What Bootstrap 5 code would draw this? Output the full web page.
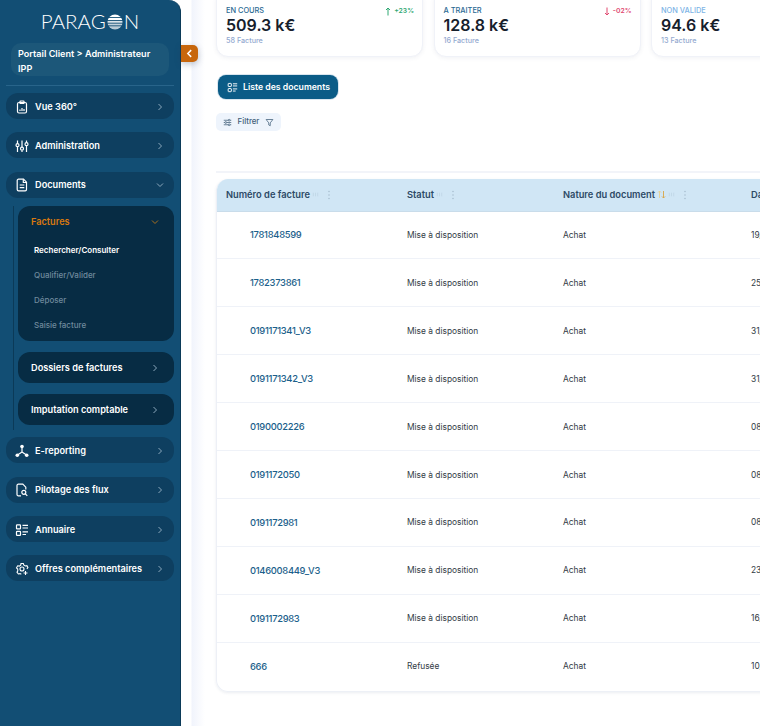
<!DOCTYPE html>
<html lang="fr">

<head>
  <meta charset="UTF-8" />
  <meta name="viewport" content="width=device-width, initial-scale=1.0" />
  <title>Paragon - Factures</title>
  <link href="https://cdn.jsdelivr.net/npm/bootstrap@5.3.0/dist/css/bootstrap.min.css" rel="stylesheet" />
  <style>
    html, body { height: 726px; overflow: hidden; }
    body { font-family: "Inter", "Liberation Sans", sans-serif; background: #fff; color: #1c2733; }

    /* sidebar */
    .side { width: 181px; height: 726px; flex: none; background: #124e74; border-top-right-radius: 12px; border-right: 1px solid #0b3a58; padding: 12px 6px 0 6px; position: relative; }
    .logo { height: 19px; color: #fff; font-family: "Lato", sans-serif; font-weight: 300; font-size: 20.5px; line-height: 19px; letter-spacing: 0; margin-bottom: 12px; }
    .logo svg { width: 16px; height: 16px; margin: 0 1px; }
    .who { margin: 0 5px 9px 5px; padding: 4px 7px; height: 33px; background: #1c5779; border-radius: 10px; color: #fff; font-size: 9.1px; font-weight: 600; line-height: 14.5px; }
    .sep { height: 1px; background: #28648a; margin-bottom: 7px; }
    .menu-it { height: 26px; background: #0e3f60; border-radius: 12px; color: #fff; font-size: 9.2px; font-weight: 600; white-space: nowrap; padding: 1px 10px 0 9px; margin-bottom: 13.3px; gap: 6px; }
    .menu-it .ico { width: 14px; height: 14px; flex: none; }
    .chev { width: 8px; height: 8px; flex: none; margin-left: auto; color: #8ba8bc; }
    .sub-wrap { border-left: 1px solid #0b3a58; margin: -5px 0 7.6px 7px; padding-left: 4px; height: 224px; }
    .sub-box { background: #072c44; border-radius: 12px; color: #fff; font-size: 9.2px; font-weight: 600; white-space: nowrap; }
    .sub-row { height: 31px; padding: 1px 15px 0 13px; margin-bottom: 11px; }
    .sub-open { height: 135px; margin-bottom: 11px; padding: 10px 15px 0 13px; }
    .sub-open .sub-head { color: #d9780f; height: 12px; margin-bottom: 16px; }
    .sub-open .sub-head .chev { color: #a8701f; }
    .leaf { font-size: 8px; font-weight: 500; color: #6f8a9d; margin-left: 3px; height: 25px; }
    .leaf.on { color: #fff; font-weight: 600; }
    .toggle { position: absolute; left: 181px; top: 45px; width: 17px; height: 17px; background: #c7660c; border-radius: 0 5px 5px 0; box-shadow: 0 2px 6px rgba(40, 60, 90, .3); color: #fff; }
    .toggle svg { width: 9px; height: 9px; }

    /* main */
    .main { flex: 1 1 auto; min-width: 0; padding-left: 35px; background: linear-gradient(90deg, #fff 10px, #f1f4fc 11px, #fff 24px); }
    .kpis { gap: 10.5px; width: 700px; margin-top: -12px; margin-bottom: 18px; }
    .kpi { width: 207px; height: 69px; flex: none; background: #fff; border: 1px solid #f0f2f8; border-radius: 12px; box-shadow: 0 1px 4px rgba(60, 80, 120, .08); padding: 17px 9px 0 9px; position: relative; }
    .kpi-lab { font-size: 7.4px; font-weight: 500; line-height: 10px; color: #2b6a93; }
    .kpi-lab.pale { color: #7db4e6; }
    .kpi-val { font-size: 16px; font-weight: 600; line-height: 19px; color: #16202c; }
    .kpi-sub { font-size: 7.2px; font-weight: 500; line-height: 10px; color: #93a9d0; margin-top: 1px; }
    .kpi-delta { position: absolute; right: 8px; top: 17px; font-size: 6.8px; font-weight: 600; line-height: 10px; gap: 3px; }
    .kpi-delta svg { width: 6px; height: 9px; }
    .delta-up { color: #2fa873; }
    .delta-down { color: #e0486f; }
    .btn-liste { margin-left: 2px; width: 120px; height: 24px; padding: 1px 0 0 1px; background: #0b5c87; border: 0; border-radius: 8px; font-size: 8.7px; font-weight: 600; color: #fff; gap: 5px; box-shadow: 0 0 0 1px #d9e6ef; }
    .btn-liste svg { width: 11px; height: 11px; }
    .filtre { width: 65px; height: 18px; margin-top: 14px; background: #eef4fc; border-radius: 5px; font-size: 7.8px; font-weight: 500; color: #3f5d78; gap: 6px; }
    .filtre svg { width: 9px; height: 9px; }
    .rule { height: 2px; background: #f2f4f9; margin: 40px 0 6px 0; width: 560px; }
    .doc-wrap { width: 900px; height: 513px; border: 1px solid #edf0f6; border-top: 0; border-radius: 12px; overflow: hidden; box-shadow: 0 1px 3px rgba(60, 80, 120, .1); }
    .doc-table { table-layout: fixed; width: 900px; margin: 0; }
    .doc-table th { height: 32px; padding: 0 0 0 9px; background: #d0e6f5; border-bottom: 1px solid #c9dcea; font-size: 9.3px; font-weight: 600; color: #2d4a66; vertical-align: middle; }
    .doc-table td { height: 47.9px; padding: 1px 0 0 9px; border-bottom: 1px solid #eff2f8; font-size: 8.4px; font-weight: 400; color: #333c46; vertical-align: middle; }
    .doc-table tr:last-child td { border-bottom: 0; }
    .doc-table td.num { padding-left: 33px; font-size: 9.4px; font-weight: 500; letter-spacing: -.3px; color: #1c5f8b; }
    .th-in { gap: 2px; }
    .th-in svg { flex: none; }
    .mini { width: 7px; height: 7px; color: #bcd2e2; }
    .dots { width: 8px; height: 10px; color: #a9c0d2; margin-left: 4px; }
    .sorter { width: 9px; height: 9px; }
    .col-num { width: 181px; }
    .col-stat { width: 156px; }
    .col-nat { width: 188px; }
  </style>
</head>

<body class="d-flex">
  <svg width="0" height="0" class="position-absolute">
    <symbol id="i-chev" viewBox="0 0 8 8"><path d="M2.5 1 5.5 4 2.5 7" fill="none" stroke="currentColor" stroke-width="1" /></symbol>
    <symbol id="i-down" viewBox="0 0 8 8"><path d="M1 2.5 4 5.5 7 2.5" fill="none" stroke="currentColor" stroke-width="1" /></symbol>
    <symbol id="i-clip" viewBox="0 0 14 14"><g fill="none" stroke="currentColor" stroke-width="1.2"><rect x="2.5" y="2.5" width="9" height="10.5" rx="1.5" /><rect x="5" y="1" width="4" height="2.5" rx=".6" /><path d="M5 9.5v1.5M7 8v3M9 9v2" /></g></symbol>
    <symbol id="i-sliders" viewBox="0 0 14 14"><g fill="none" stroke="currentColor" stroke-width="1.2"><path d="M2.5 1.5v3M2.5 8v5M7 1.5v6.5M7 11.5v1.5M11.5 1.5v2M11.5 7v6" /><circle cx="2.5" cy="6.2" r="1.5" /><circle cx="7" cy="9.7" r="1.5" /><circle cx="11.5" cy="5.2" r="1.5" /></g></symbol>
    <symbol id="i-doc" viewBox="0 0 14 14"><g fill="none" stroke="currentColor" stroke-width="1.2"><path d="M3.5 1.2h5l3 3v7.3a1.3 1.3 0 0 1-1.3 1.3H3.5a1.3 1.3 0 0 1-1.3-1.3v-9a1.3 1.3 0 0 1 1.3-1.3z" /><path d="M8.3 1.4v3.1h3M4.7 7h4.6M4.7 9.700h4.6" /></g></symbol>
    <symbol id="i-net" viewBox="0 0 14 14"><g fill="currentColor"><circle cx="7" cy="2.500" r="1.800" /><circle cx="2.300" cy="11.300" r="1.800" /><circle cx="11.700" cy="11.300" r="1.800" /></g><path d="M7 3v5M7 8 2.500 11M7 8l4.500 3" fill="none" stroke="currentColor" stroke-width="1.200" /></symbol>
    <symbol id="i-search" viewBox="0 0 14 14"><g fill="none" stroke="currentColor" stroke-width="1.200"><path d="M6 12.800H3.300A1.300 1.300 0 0 1 2 11.500v-9a1.300 1.300 0 0 1 1.300-1.300h4.500l3 3v2.300" /><circle cx="8.800" cy="9.300" r="2" /><path d="M10.300 10.800 12.300 12.800" /></g></symbol>
    <symbol id="i-list" viewBox="0 0 14 14"><g fill="none" stroke="currentColor" stroke-width="1.200"><rect x="1.500" y="1.800" width="4" height="4" rx=".6" /><rect x="1.500" y="8.300" width="4" height="4" rx=".6" /><path d="M7.500 2.300h5.500M7.500 5h5.500M7.500 8.800h5.500M7.500 11.500h3.500" /></g></symbol>
    <symbol id="i-gear" viewBox="0 0 14 14"><g fill="none" stroke="currentColor" stroke-width="1.100"><path d="M6.300 12.300 5 11.600 3.400 12 2 10.200l.8-1.400L2.700 7 1.500 5.800l1.200-2 1.600.3 1.400-1L6 1.500h2.300l.6 1.600 1.400.9 1.600-.3 1 1.800-1 1.300" /><circle cx="7" cy="7" r="2" /><path d="M10.500 9v4M8.500 11h4" /></g></symbol>
    <symbol id="i-tune" viewBox="0 0 12 12"><path d="M1 3h6M9.500 3H11M1 6h1.500M5 6h6M1 9h6M9.500 9H11" fill="none" stroke="currentColor" stroke-width="1" /><g fill="none" stroke="currentColor" stroke-width="1"><circle cx="8.200" cy="3" r="1.200" /><circle cx="3.700" cy="6" r="1.200" /><circle cx="8.200" cy="9" r="1.200" /></g></symbol>
    <symbol id="i-funnel" viewBox="0 0 12 12"><path d="M1.500 2h9L7 6.500v3.800L5 9.300V6.500z" fill="none" stroke="currentColor" stroke-width="1" /></symbol>
    <symbol id="i-bars" viewBox="0 0 8 8"><path d="M1.500 2v4M4 2v4M6.500 2v4" fill="none" stroke="currentColor" stroke-width=".8" /></symbol>
    <symbol id="i-dots" viewBox="0 0 8 10"><g fill="currentColor"><circle cx="4" cy="1.500" r=".8" /><circle cx="4" cy="5" r=".8" /><circle cx="4" cy="8.500" r=".8" /></g></symbol>
    <symbol id="i-up-arrow" viewBox="0 0 6 9"><path d="M3 8.500V1M1 3 3 1l2 2" fill="none" stroke="currentColor" stroke-width="1" /></symbol>
    <symbol id="i-down-arrow" viewBox="0 0 6 9"><path d="M3 .5V8M1 6l2 2 2-2" fill="none" stroke="currentColor" stroke-width="1" /></symbol>
    <symbol id="i-sort" viewBox="0 0 9 9"><path d="M2.500 8V1M1 2.500 2.500 1 4 2.500" fill="none" stroke="#e8cf90" stroke-width=".9" /><path d="M6.500 1v7M5 6.500 6.500 8 8 6.500" fill="none" stroke="#d9a545" stroke-width=".9" /></symbol>
  </svg>

  <aside class="side">
    <div class="logo d-flex justify-content-center align-items-center">PARAG<svg viewBox="0 0 18 18"><defs><clipPath id="disc"><circle cx="9" cy="9" r="8.500" /></clipPath></defs><g clip-path="url(#disc)" fill="#fff"><rect y="0" width="18" height="3.400" /><rect y="4.400" width="18" height="2.400" /><rect y="7.800" width="18" height="2" opacity=".85" /><rect y="10.800" width="18" height="2" opacity=".75" /><rect y="13.800" width="18" height="4.200" opacity=".7" /></g></svg>N</div>
    <div class="who">Portail Client &gt; Administrateur IPP</div>
    <div class="sep"></div>

    <div class="menu-it d-flex align-items-center"><svg class="ico"><use href="#i-clip" /></svg>Vue 360°<svg class="chev"><use href="#i-chev" /></svg></div>
    <div class="menu-it d-flex align-items-center"><svg class="ico"><use href="#i-sliders" /></svg>Administration<svg class="chev"><use href="#i-chev" /></svg></div>
    <div class="menu-it d-flex align-items-center"><svg class="ico"><use href="#i-doc" /></svg>Documents<svg class="chev"><use href="#i-down" /></svg></div>

    <div class="sub-wrap">
      <div class="sub-box sub-open">
        <div class="sub-head d-flex align-items-center">Factures<svg class="chev"><use href="#i-down" /></svg></div>
        <div class="leaf on">Rechercher/Consulter</div>
        <div class="leaf">Qualifier/Valider</div>
        <div class="leaf">Déposer</div>
        <div class="leaf">Saisie facture</div>
      </div>
      <div class="sub-box sub-row d-flex align-items-center">Dossiers de factures<svg class="chev"><use href="#i-chev" /></svg></div>
      <div class="sub-box sub-row d-flex align-items-center">Imputation comptable<svg class="chev"><use href="#i-chev" /></svg></div>
    </div>

    <div class="menu-it d-flex align-items-center"><svg class="ico"><use href="#i-net" /></svg>E-reporting<svg class="chev"><use href="#i-chev" /></svg></div>
    <div class="menu-it d-flex align-items-center"><svg class="ico"><use href="#i-search" /></svg>Pilotage des flux<svg class="chev"><use href="#i-chev" /></svg></div>
    <div class="menu-it d-flex align-items-center"><svg class="ico"><use href="#i-list" /></svg>Annuaire<svg class="chev"><use href="#i-chev" /></svg></div>
    <div class="menu-it d-flex align-items-center"><svg class="ico"><use href="#i-gear" /></svg>Offres complémentaires<svg class="chev"><use href="#i-chev" /></svg></div>

    <div class="toggle d-flex align-items-center justify-content-center"><svg viewBox="0 0 8 8"><path d="M5.500 1 2.500 4 5.500 7" fill="none" stroke="currentColor" stroke-width="1.300" /></svg></div>
  </aside>

  <main class="main">
    <div class="kpis d-flex">
      <div class="kpi">
        <div class="kpi-lab">EN COURS</div>
        <div class="kpi-val">509.3 k€</div>
        <div class="kpi-sub">58 Facture</div>
        <div class="kpi-delta delta-up d-flex align-items-center text-nowrap"><svg><use href="#i-up-arrow" /></svg>+23%</div>
      </div>
      <div class="kpi">
        <div class="kpi-lab">A TRAITER</div>
        <div class="kpi-val">128.8 k€</div>
        <div class="kpi-sub">16 Facture</div>
        <div class="kpi-delta delta-down d-flex align-items-center text-nowrap"><svg><use href="#i-down-arrow" /></svg>-02%</div>
      </div>
      <div class="kpi">
        <div class="kpi-lab pale">NON VALIDE</div>
        <div class="kpi-val">94.6 k€</div>
        <div class="kpi-sub">13 Facture</div>
      </div>
    </div>

    <button class="btn btn-liste d-flex align-items-center justify-content-center"><svg><use href="#i-list" /></svg>Liste des documents</button>
    <div class="filtre d-flex align-items-center justify-content-center"><svg><use href="#i-tune" /></svg>Filtrer<svg><use href="#i-funnel" /></svg></div>
    <div class="rule"></div>

    <div class="doc-wrap">
      <table class="table doc-table">
        <colgroup><col class="col-num" /><col class="col-stat" /><col class="col-nat" /><col /></colgroup>
        <thead>
          <tr>
            <th><div class="th-in d-flex align-items-center">Numéro de facture<svg class="mini"><use href="#i-bars" /></svg><svg class="dots"><use href="#i-dots" /></svg></div></th>
            <th><div class="th-in d-flex align-items-center">Statut<svg class="mini"><use href="#i-bars" /></svg><svg class="dots"><use href="#i-dots" /></svg></div></th>
            <th><div class="th-in d-flex align-items-center">Nature du document<svg class="sorter"><use href="#i-sort" /></svg><svg class="mini"><use href="#i-bars" /></svg><svg class="dots"><use href="#i-dots" /></svg></div></th>
            <th>Date</th>
          </tr>
        </thead>
        <tbody id="rows"></tbody>
      </table>
    </div>
  </main>

  <script>
    const docs = [
      ["1781848599", "Mise à disposition", "19/"],
      ["1782373861", "Mise à disposition", "25/"],
      ["0191171341_V3", "Mise à disposition", "31/"],
      ["0191171342_V3", "Mise à disposition", "31/"],
      ["0190002226", "Mise à disposition", "08/"],
      ["0191172050", "Mise à disposition", "08/"],
      ["0191172981", "Mise à disposition", "08/"],
      ["0146008449_V3", "Mise à disposition", "23/"],
      ["0191172983", "Mise à disposition", "16/"],
      ["666", "Refusée", "10/"]
    ];
    document.getElementById("rows").innerHTML = docs.map(d =>
      `<tr><td class="num">${d[0]}</td><td>${d[1]}</td><td>Achat</td><td>${d[2]}</td></tr>`).join("");
  </script>

  <script src="https://cdn.jsdelivr.net/npm/bootstrap@5.3.0/dist/js/bootstrap.bundle.min.js"></script>
</body>

</html>
